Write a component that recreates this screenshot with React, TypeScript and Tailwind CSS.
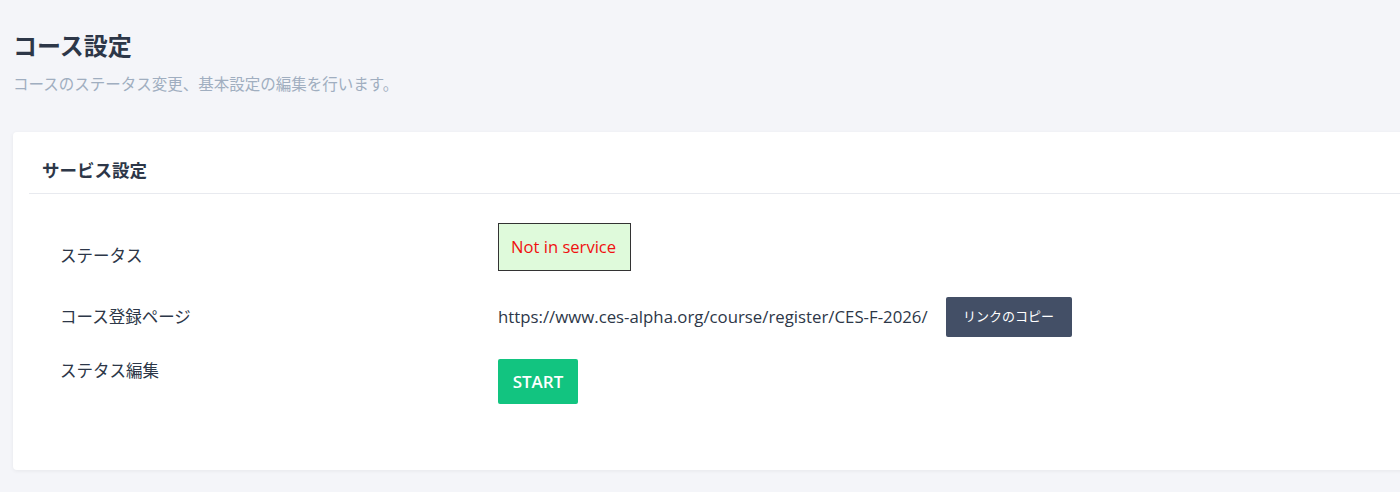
import React from 'react'

const font = { fontFamily: '"Open Sans", "Noto Sans CJK JP", sans-serif' }

function StatusBadge({ label }: { label: string }): React.ReactElement {
  return (
    <div className="flex h-[48px] items-center border border-[#333] bg-[#dffadb] pl-[12px] pr-[14px] text-[16.6px] text-[#f01010]">
      {label}
    </div>
  )
}

export default function App(): React.ReactElement {
  return (
    <div className="min-h-[492px] overflow-hidden bg-[#f4f5f9] text-[#2d3748]" style={font}>
      {/* Page heading */}
      <div className="px-[13px] pt-[30px]">
        <h1 className="text-[24px] font-bold leading-[32px] text-[#2d3748]">コース設定</h1>
        <p className="mt-[11px] text-[15.5px] leading-[22px] text-[#a0aec0]">
          コースのステータス変更、基本設定の編集を行います。
        </p>
      </div>

      {/* Card */}
      <div className="ml-[13px] mr-[-40px] mt-[37px] rounded-[4px] bg-white pb-[66px] shadow-[0_1px_4px_rgba(0,0,0,0.06)]">
        <div className="pl-[16px] pt-[26px]">
          <h2 className="pl-[13px] text-[17.5px] font-bold leading-[24px] text-[#2d3748]">サービス設定</h2>
          <div className="mt-[11px] border-b border-[#e8eaef]" />
        </div>

        <div className="mt-[29px] flex flex-col pl-[47px]">
          <div className="flex items-start">
            <div className="mt-[21px] w-[438px] text-[16.5px] leading-[24px]">ステータス</div>
            <StatusBadge label="Not in service" />
          </div>

          <div className="mt-[26px] flex h-[40px] items-center">
            <div className="w-[438px] text-[16.5px] leading-[24px]">コース登録ページ</div>
            <span className="text-[16.8px]">https://www.ces-alpha.org/course/register/CES-F-2026/</span>
            <button
              type="button"
              className="ml-[18px] h-[40px] w-[126px] rounded-[2px] bg-[#434f66] text-[13px] text-white"
            >
              リンクのコピー
            </button>
          </div>

          <div className="mt-[22px] flex items-start">
            <div className="w-[438px] text-[16.5px] leading-[24px]">ステタス編集</div>
            <button
              type="button"
              className="h-[45px] w-[80px] rounded-[2px] bg-[#12c480] text-[17px] font-semibold text-white"
            >
              START
            </button>
          </div>
        </div>
      </div>
    </div>
  )
}
